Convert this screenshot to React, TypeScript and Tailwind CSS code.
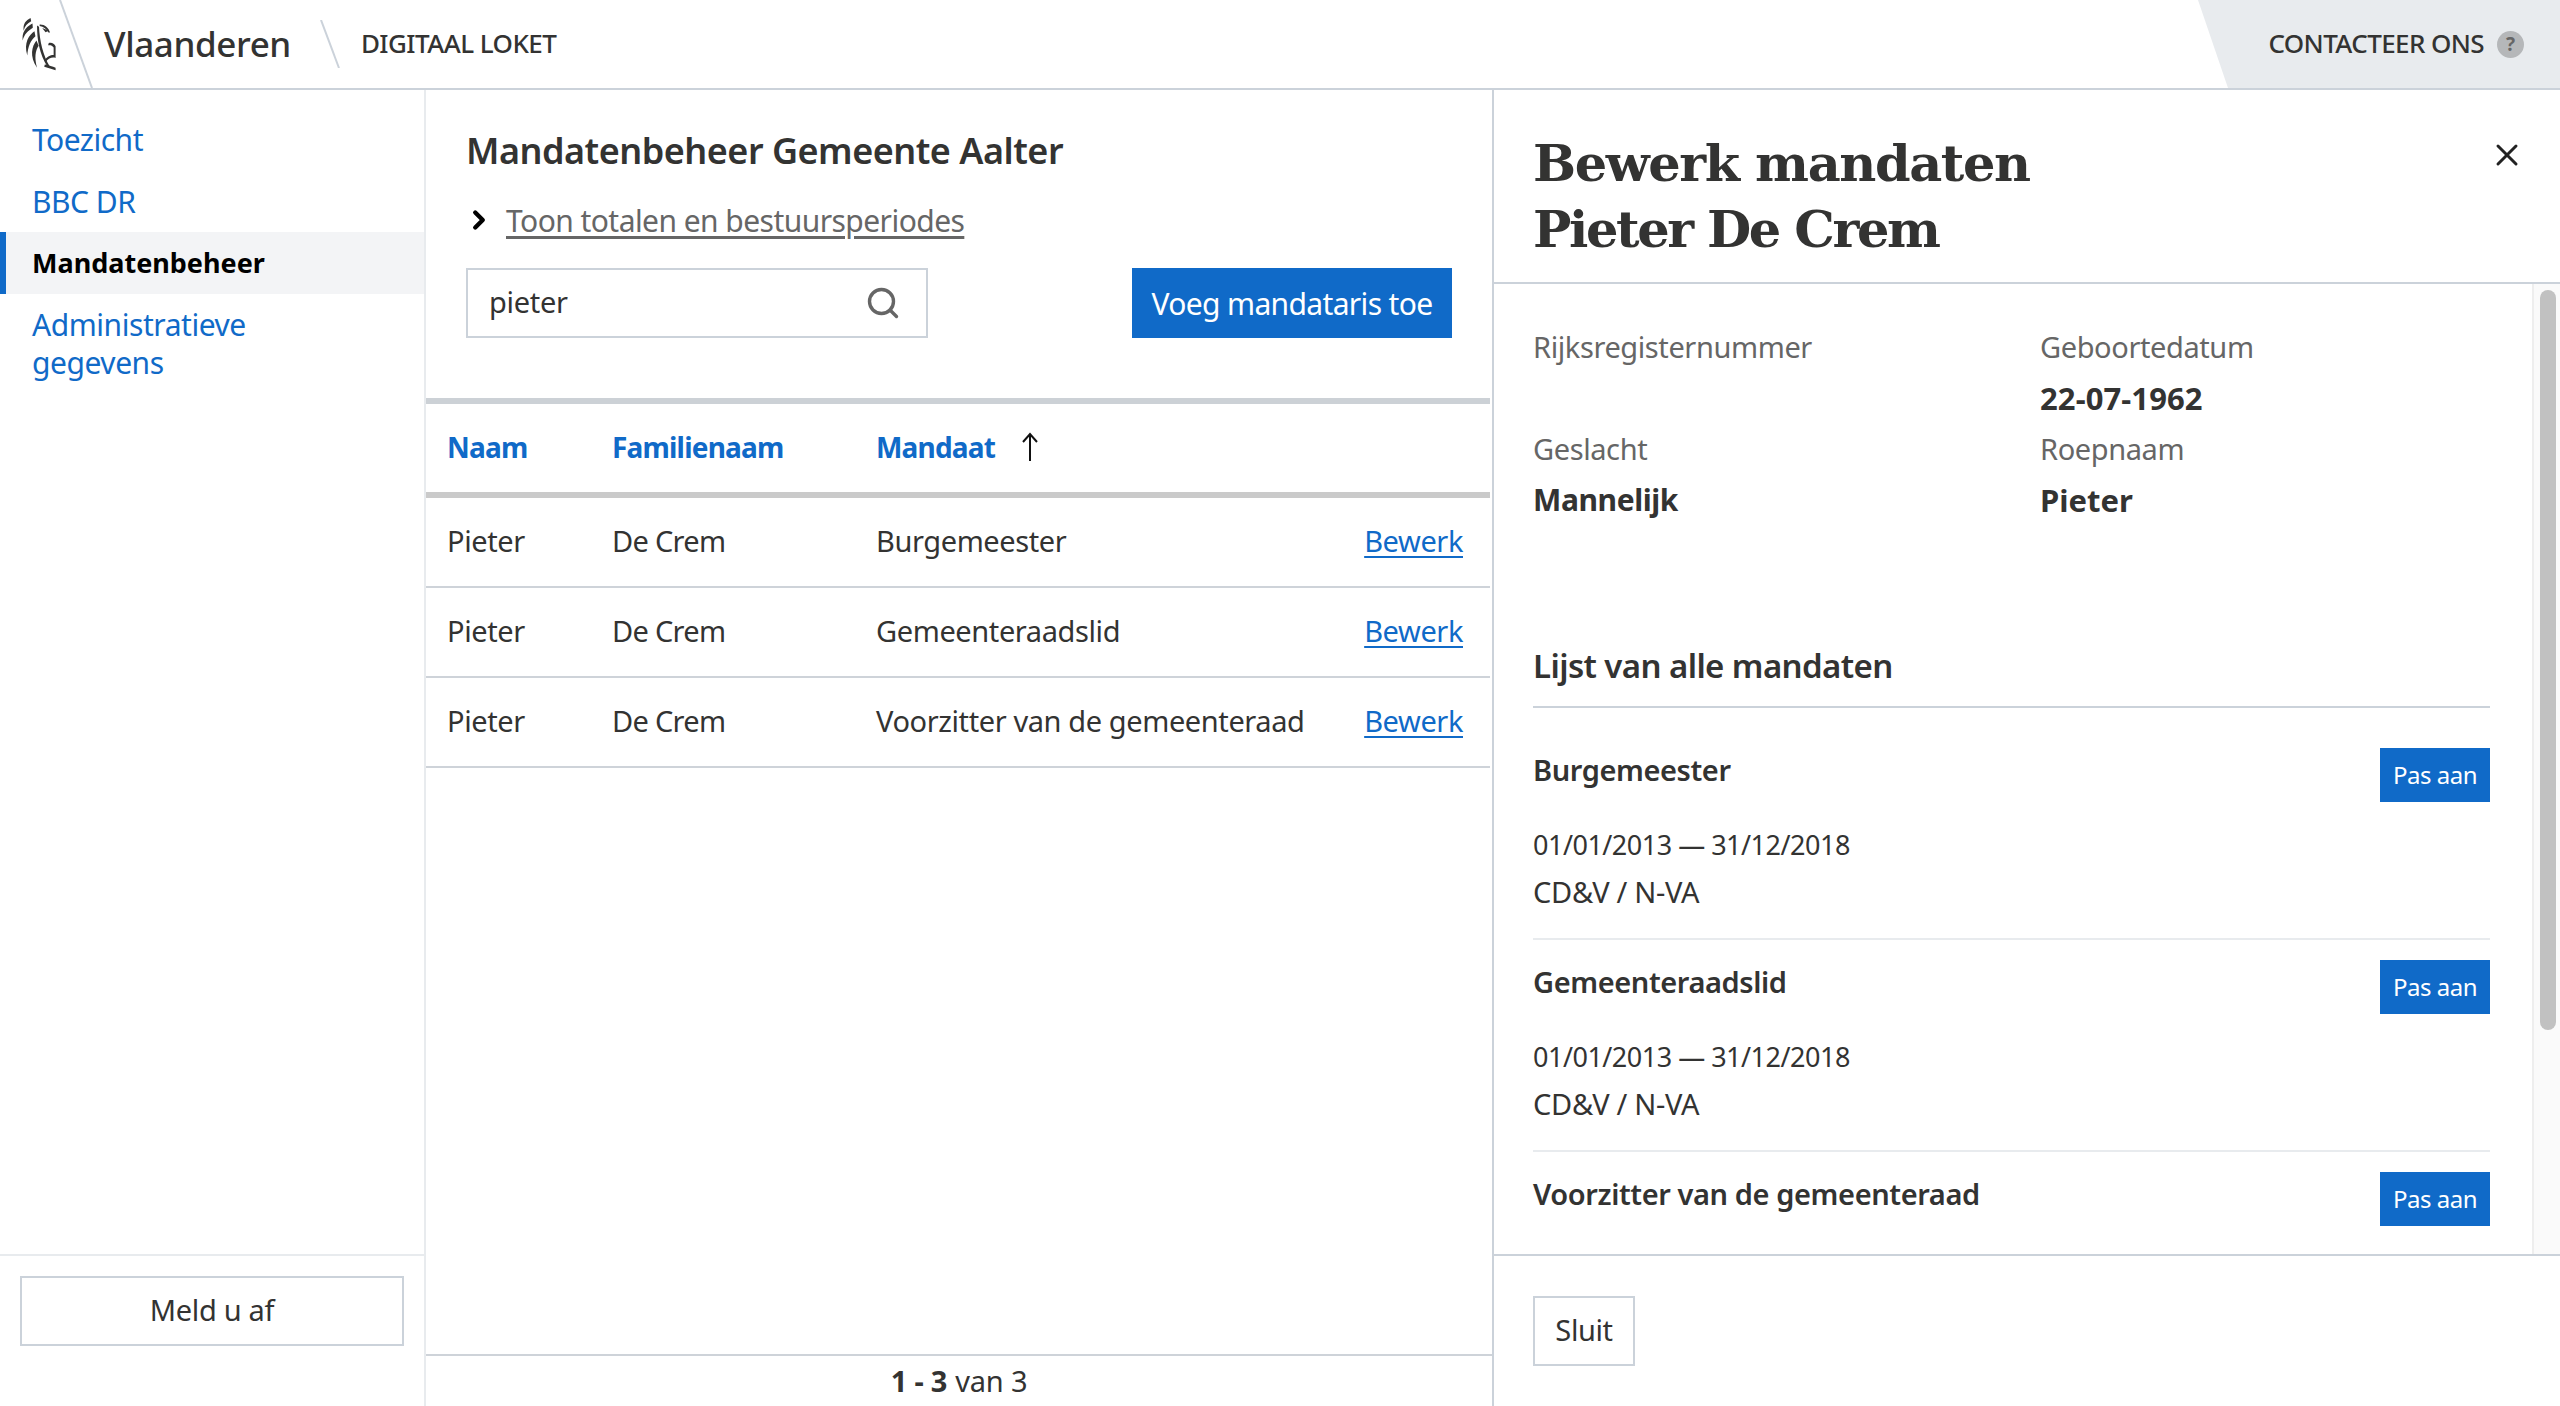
import { ChevronRight, Search, X } from 'lucide-react';

const font = "[font-family:'Noto_Sans',sans-serif]";

const LionLogo = () => (
  <svg viewBox="66 52 104 166" className="w-[34px] h-[54px] shrink-0" fill="#333332">
    <path d="M92 55C78 62 68 72 71 94C74 80 82 72 94 65Z" />
    <path d="M98 72C82 80 64 96 68 124C72 106 84 94 99 85Z" />
    <path d="M104 96C88 106 70 132 82 170C84 142 92 124 107 111Z" />
    <path d="M110 124C96 142 88 172 112 208C104 178 106 156 117 140Z" />
    <path d="M112 78C112 120 118 165 146 208L152 206C130 170 120 125 118 82Z" />
    <path d="M120 75C134 74 148 84 152 100L147 100C142 90 132 82 120 80Z" />
    <path d="M128 86L148 94L138 99Z" />
    <path d="M148 132C158 130 165 134 169 142V178C160 174 148 178 138 190L134 186C144 172 156 168 163 169V146C158 138 152 138 146 139Z" />
    <path d="M136 198C148 200 160 204 169 208V216C158 212 146 208 134 205Z" />
  </svg>
);

const sideLinks = ['Toezicht', 'BBC DR'];

const rows = ['Burgemeester', 'Gemeenteraadslid', 'Voorzitter van de gemeenteraad'];

const MandateRow = ({ title, last }: { title: string; last?: boolean }) => (
  <div className={`h-[212px] shrink-0 pt-[20px] ${last ? '' : 'border-b-2 border-[#e8ebee]'}`}>
    <div className="flex justify-between items-start">
      <div className="text-[29px] leading-[44px] font-semibold text-[#333332] tracking-[-0.4px]">{title}</div>
      <button className="w-[110px] h-[54px] bg-[#106ac8] text-white text-[24px] tracking-[-0.5px]">Pas aan</button>
    </div>
    {!last && (
      <div className="mt-[19px] text-[#333332]">
        <div className="text-[27px] leading-[47px] tracking-[-0.5px]">01/01/2013 — 31/12/2018</div>
        <div className="text-[29px] leading-[47px] tracking-[-0.3px]">CD&amp;V / N-VA</div>
      </div>
    )}
  </div>
);

export default function App() {
  return (
    <div className={`${font} w-[2560px] h-[1406px] flex flex-col overflow-hidden bg-white text-[#333332]`}>
      <header className="h-[90px] shrink-0 flex items-center border-b-2 border-[#cbd2da]">
        <div className="pl-[22px] flex items-center">
          <LionLogo />
        </div>
        <svg viewBox="0 0 40 88" className="w-[40px] h-[88px] shrink-0">
          <path d="M4 0L36 88" stroke="#cbd2da" strokeWidth="2" fill="none" />
        </svg>
        <div className="ml-[8px] text-[35px] font-medium tracking-[-0.4px]">Vlaanderen</div>
        <svg viewBox="0 0 20 48" className="w-[20px] h-[48px] ml-[29px] shrink-0">
          <path d="M1 0L19 48" stroke="#cbd2da" strokeWidth="2" fill="none" />
        </svg>
        <div className="ml-[21px] text-[26px] leading-[34px] -mt-[2px] font-medium tracking-[-0.55px]">DIGITAAL LOKET</div>
        <div className="ml-auto w-[362px] h-[88px] bg-[#e8ebee] [clip-path:polygon(0_0,100%_0,100%_100%,30px_100%)] flex items-center justify-end pr-[36px] gap-[13px]">
          <span className="text-[26px] leading-[34px] -mt-[2px] font-medium tracking-[-0.6px]">CONTACTEER ONS</span>
          <span className="w-[27px] h-[27px] rounded-full bg-[#b5b7b9] text-[#666666] text-[19px] font-bold flex items-center justify-center">?</span>
        </div>
      </header>

      <div className="flex-1 flex min-h-0">
        <aside className="w-[426px] shrink-0 flex flex-col border-r-2 border-[#e8ebee]">
          <nav className="flex-1 pt-[18px] text-[30px]">
            {sideLinks.map((l) => (
              <div key={l} className="h-[62px] pl-[32px] flex items-center text-[#106ac8] tracking-[-0.5px]">{l}</div>
            ))}
            <div className="h-[62px] pl-[26px] flex items-center text-[27px] font-bold text-black bg-[#f3f4f6] border-l-[6px] border-[#106ac8]">Mandatenbeheer</div>
            <div className="pl-[32px] pt-[12px] leading-[38px] text-[#106ac8] tracking-[-0.45px]">Administratieve<br />gegevens</div>
          </nav>
          <div className="h-[152px] border-t-2 border-[#e8ebee] px-[20px] pt-[20px]">
            <button className="w-full h-[70px] pb-[2px] border-2 border-[#cbd2da] text-[29px] tracking-[-0.3px]">Meld u af</button>
          </div>
        </aside>

        <main className="w-[1066px] shrink-0 flex flex-col">
          <div className="h-[308px] shrink-0 px-[40px] pt-[36px]">
            <h1 className="text-[36px] leading-[50px] font-semibold tracking-[-0.5px]">Mandatenbeheer Gemeente Aalter</h1>
            <div className="mt-[24px] flex items-center h-[40px] text-[30px] text-[#666666] tracking-[-0.55px]">
              <ChevronRight className="w-[30px] h-[30px] text-black -ml-[2px]" strokeWidth={3.5} />
              <span className="ml-[12px] underline underline-offset-4">Toon totalen en bestuursperiodes</span>
            </div>
            <div className="mt-[28px] flex justify-between">
              <div className="w-[462px] h-[70px] border-2 border-[#cbd2da] pl-[21px] pr-[25px] flex items-center justify-between">
                <span className="text-[29px] tracking-[-0.3px] pb-[2px]">pieter</span>
                <Search className="w-[36px] h-[36px] text-[#666666]" strokeWidth={2.25} />
              </div>
              <button className="w-[320px] h-[70px] bg-[#106ac8] text-white text-[30px] tracking-[-0.65px]">Voeg mandataris toe</button>
            </div>
          </div>
          <div className="h-[100px] shrink-0 border-y-[6px] border-t-[#ccd1d6] border-b-[#cacaca] flex items-center pl-[21px] pb-[2px] text-[28px] font-bold text-[#106ac8] tracking-[-0.8px] mr-[2px]">
            <span className="w-[165px]">Naam</span>
            <span className="w-[264px]">Familienaam</span>
            <span>Mandaat</span>
            <svg viewBox="0 0 20 30" className="w-[20px] h-[30px] ml-[25px] shrink-0" fill="none" stroke="#111111" strokeWidth="2">
              <path d="M10 29V2M3 10L10 2L17 10" />
            </svg>
          </div>
          {rows.map((r) => (
            <div key={r} className="h-[90px] shrink-0 border-b-2 border-[#ced3d9] flex items-center pl-[21px] pr-[27px] pb-[2px] text-[29px] tracking-[-0.4px] text-[#333332] mr-[2px]">
              <span className="w-[165px]">Pieter</span>
              <span className="w-[264px] tracking-[-0.7px]">De Crem</span>
              <span className="flex-1">{r}</span>
              <span className="text-[#106ac8] underline underline-offset-4">Bewerk</span>
            </div>
          ))}
          <div className="mt-auto h-[52px] border-t-2 border-[#ced3d9] flex items-center justify-center text-[29px] tracking-[-0.2px]">
            <span className="font-bold">1 - 3</span>
            <span className="ml-[8px]">van 3</span>
          </div>
        </main>

        <section className="flex-1 min-w-0 flex flex-col border-l-2 border-[#cbd2da]">
          <div className="h-[194px] shrink-0 border-b-2 border-[#cbd2da] pl-[39px] pr-[35px] pt-[40px] flex justify-between items-start">
            <h2 className="[font-family:'DejaVu_Serif',serif] font-bold text-[51px] leading-[66px]">
              <span className="block tracking-[-1.4px]">Bewerk mandaten</span>
              <span className="block tracking-[-2.4px]">Pieter De Crem</span>
            </h2>
            <X className="w-[36px] h-[36px] mt-[7px] text-[#222222]" strokeWidth={2} />
          </div>
          <div className="flex-1 min-h-0 flex overflow-hidden">
            <div className="flex-1 min-w-0 pl-[39px] pr-[42px] pt-[37px] overflow-hidden">
              <div className="grid grid-cols-[507px_1fr] text-[29px] tracking-[-0.4px]">
                <div>
                  <div className="h-[52px] leading-[52px] text-[#666666]">Rijksregisternummer</div>
                  <div className="h-[50px]" />
                </div>
                <div>
                  <div className="h-[52px] leading-[52px] text-[#666666]">Geboortedatum</div>
                  <div className="h-[50px] leading-[50px] font-bold text-[31px] tracking-[0.1px]">22-07-1962</div>
                </div>
                <div>
                  <div className="h-[52px] leading-[52px] text-[#666666]">Geslacht</div>
                  <div className="h-[50px] leading-[50px] font-bold text-[30px]">Mannelijk</div>
                </div>
                <div>
                  <div className="h-[52px] leading-[52px] text-[#666666]">Roepnaam</div>
                  <div className="h-[50px] leading-[50px] font-bold text-[31px] tracking-[0px]">Pieter</div>
                </div>
              </div>
              <div className="mt-[113px] h-[70px] border-b-2 border-[#cbd2da] text-[33px] leading-[56px] font-semibold tracking-[-0.6px]">Lijst van alle mandaten</div>
              <div className="pt-[20px]">
                {rows.map((r, i) => (
                  <MandateRow key={r} title={r} last={i === rows.length - 1} />
                ))}
              </div>
            </div>
            <div className="w-[28px] shrink-0 border-l-2 border-[#eeeeee] bg-[#fafafa] pt-[6px] pl-[6px] pr-[4px]">
              <div className="h-[740px] rounded-full bg-[#c1c1c1]" />
            </div>
          </div>
          <div className="h-[152px] shrink-0 border-t-2 border-[#cbd2da] pl-[39px] pt-[40px]">
            <button className="w-[102px] h-[70px] pb-[2px] border-2 border-[#cbd2da] text-[29px] tracking-[-0.4px]">Sluit</button>
          </div>
        </section>
      </div>
    </div>
  );
}
